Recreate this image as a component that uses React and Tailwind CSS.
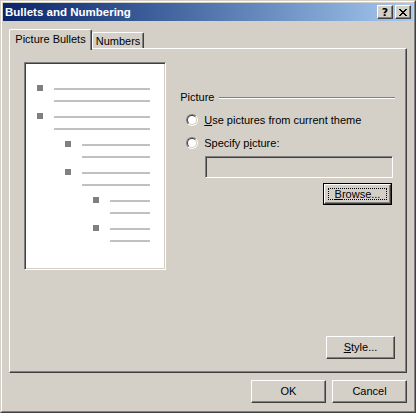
import React from 'react';

const raised =
  'border border-t-white border-l-white border-r-[#404040] border-b-[#404040] shadow-[inset_-1px_-1px_0_#808080] bg-[#d4d0c8]';
const sunken =
  'border border-t-[#808080] border-l-[#808080] border-r-white border-b-white shadow-[inset_1px_1px_0_#404040,inset_-1px_-1px_0_#d4d0c8]';

const items = [
  { pad: 'pl-[11px]' },
  { pad: 'pl-[11px]' },
  { pad: 'pl-[39px]' },
  { pad: 'pl-[39px]' },
  { pad: 'pl-[67px]' },
  { pad: 'pl-[67px]' },
];

const Radio = () => (
  <div className="w-[12px] h-[12px] rounded-full border border-t-[#808080] border-l-[#808080] border-r-white border-b-white">
    <div className="w-full h-full rounded-full border border-t-[#404040] border-l-[#404040] border-r-[#d4d0c8] border-b-[#d4d0c8] bg-white" />
  </div>
);

const Button = ({ children, className = '' }) => (
  <div className={`${raised} flex items-center justify-center ${className}`}>{children}</div>
);

export default function App() {
  return (
    <div className="w-[416px] h-[413px] bg-[#d4d0c8] border border-t-[#d4d0c8] border-l-[#d4d0c8] border-r-[#404040] border-b-[#404040] font-['Liberation_Sans',Arial,sans-serif] text-[11px] leading-[13px] text-black select-none">
      <div className="h-full border border-t-white border-l-white border-r-[#808080] border-b-[#808080] p-px flex flex-col">
        {/* title bar */}
        <div className="h-[18px] shrink-0 bg-gradient-to-r from-[#0a246a] to-[#a6caf0] flex items-center pl-[2px] pr-[2px]">
          <span className="text-white font-bold text-[11.5px] leading-[14px]">Bullets and Numbering</span>
          <div className="ml-auto flex gap-[2px]">
            <div className={`${raised} w-[16px] h-[14px] flex items-center justify-center`}>
              <span className="font-bold text-[11px] leading-[11px] font-['DejaVu_Sans',sans-serif]">?</span>
            </div>
            <div className={`${raised} w-[16px] h-[14px] flex items-center justify-center`}>
              <svg width="8" height="7" viewBox="0 0 8 7" shapeRendering="crispEdges">
                <path d="M0 0h2v1h-2zM6 0h2v1h-2zM1 1h2v1h-2zM5 1h2v1h-2zM2 2h4v1h-4zM3 3h2v1h-2zM2 4h4v1h-4zM1 5h2v1h-2zM5 5h2v1h-2zM0 6h2v1h-2zM6 6h2v1h-2z" fill="#000" />
              </svg>
            </div>
          </div>
        </div>

        {/* body */}
        <div className="flex-1 flex flex-col px-[6px] pt-[8px]">
          {/* tabs */}
          <div className="h-[19px] flex items-end">
            <div className="relative z-10 w-[83px] h-[21px] mb-[-2px] bg-[#d4d0c8] border-l border-t border-r border-l-white border-t-white border-r-[#404040] shadow-[inset_-1px_0_0_#808080] rounded-t-[2px] flex justify-center pt-[3px]">
              Picture Bullets
            </div>
            <div className="w-[52px] h-[16px] bg-[#d4d0c8] border-l border-t border-r border-l-white border-t-white border-r-[#404040] shadow-[inset_-1px_0_0_#808080] rounded-t-[2px] flex justify-center pt-[2px]">
              Numbers
            </div>
          </div>

          {/* panel */}
          <div className="h-[325px] border border-t-white border-l-white border-r-[#404040] border-b-[#404040] shadow-[inset_-1px_-1px_0_#808080] flex flex-col pl-[14px] pt-[13px] pr-[11px] pb-[13px]">
            <div className="flex items-start">
              {/* preview */}
              <div className={`${sunken} w-[143px] h-[208px] bg-white p-px`}>
                <div className="pt-[21px] pr-[14px]">
                  {items.map((it, i) => (
                    <div key={i} className={`h-[28px] flex ${it.pad}`}>
                      <div className="w-[6px] h-[6px] bg-[#808080] shrink-0" />
                      <div className="flex-1 ml-[11px] pt-[3px]">
                        <div className="h-[2px] bg-[#c0c0c0]" />
                        <div className="h-[2px] bg-[#c0c0c0] mt-[10px]" />
                      </div>
                    </div>
                  ))}
                </div>
              </div>

              {/* picture group */}
              <div className="w-[217px] ml-[13px] mt-[29px] flex flex-col">
                <div className="flex items-center h-[13px]">
                  <span className="ml-px">Picture</span>
                  <div className="flex-1 ml-[5px] h-[2px] border-t border-b border-t-[#808080] border-b-white" />
                </div>
                <div className="flex items-center h-[12px] mt-[10px] ml-[7px]">
                  <Radio />
                  <span className="ml-[6px]">
                    <span className="underline">U</span>se pictures from current theme
                  </span>
                </div>
                <div className="flex items-center h-[12px] mt-[11px] ml-[7px]">
                  <Radio />
                  <span className="ml-[6px]">
                    Specify p<span className="underline">i</span>cture:
                  </span>
                </div>
                <div className={`${sunken} ml-[26px] mt-[7px] w-[188px] h-[22px] bg-[#d4d0c8]`} />
                <div className="self-end mr-[3px] mt-[5px] w-[69px] h-[22px] border border-black">
                  <div className={`${raised} w-full h-full flex p-[3px]`}>
                    <div className="flex-1 border border-dotted border-black flex items-center justify-center leading-[12px]">
                      <span>
                        <span className="underline">B</span>rowse...
                      </span>
                    </div>
                  </div>
                </div>
              </div>
            </div>

            <div className="mt-auto flex justify-end">
              <Button className="w-[69px] h-[23px]">
                <span>
                  <span className="underline">S</span>tyle...
                </span>
              </Button>
            </div>
          </div>

          {/* dialog buttons */}
          <div className="mt-[7px] flex justify-end gap-[6px]">
            <Button className="w-[75px] h-[23px]">OK</Button>
            <Button className="w-[75px] h-[23px]">Cancel</Button>
          </div>
        </div>
      </div>
    </div>
  );
}
